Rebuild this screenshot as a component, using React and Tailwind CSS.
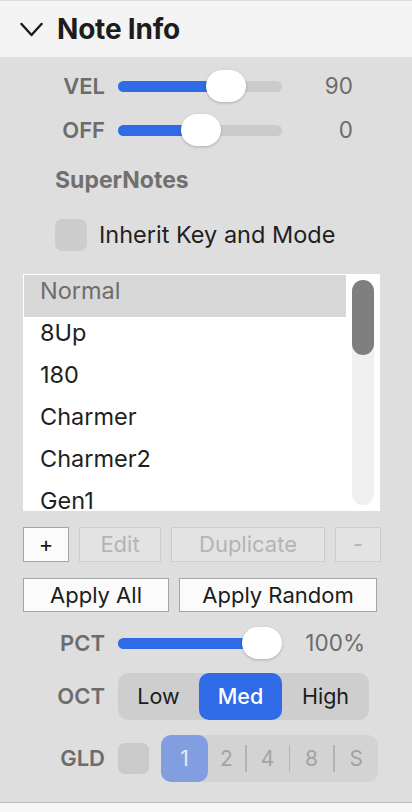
import React from 'react';

const FONT = "font-['Inter','Liberation_Sans',sans-serif]";

const Slider = ({ frac }) => {
  const left = Math.round(frac * 124);
  return (
    <div className="relative w-[164px] h-[11px] rounded-full bg-[#cbcbcb]">
      <div className="absolute left-0 top-0 h-full rounded-full bg-[#2f6be7]" style={{ width: left + 20 }} />
      <div
        className="absolute top-[-11px] w-[40px] h-[32px] rounded-[16px] bg-white shadow-[0_1px_3px_rgba(0,0,0,0.22)]"
        style={{ left }}
      />
    </div>
  );
};

const SliderRow = ({ label, frac, value, valueWidth = 'w-[71px]' }) => (
  <div className="flex items-center h-[32px]">
    <span className="w-[105px] text-right text-[22px] font-semibold text-[#6c6c6c]">{label}</span>
    <div className="ml-[13px]">
      <Slider frac={frac} />
    </div>
    <span className={`${valueWidth} text-right text-[22.5px] text-[#6c6c6c]`}>{value}</span>
  </div>
);

const Btn = ({ children, width, disabled, height = 'h-[35px]' }) => (
  <button
    className={`${width} ${height} flex items-center justify-center text-[22px] border-[1.5px] ${
      disabled
        ? 'bg-[#e3e3e3] border-[#cdcdcd] text-[#b4b4b4]'
        : 'bg-[#fbfbfb] border-[#a5a5a5] text-[#1c1c1c]'
    }`}
  >
    {children}
  </button>
);

const items = ['Normal', '8Up', '180', 'Charmer', 'Charmer2', 'Gen1'];

export default function App() {
  return (
    <div className={`w-[412px] h-[812px] bg-[#f7f7f7] ${FONT}`}>
      {/* header */}
      <div className="h-[57px] border-t border-[#dcdcdc] bg-[#f4f4f4] flex items-center pl-[20px]">
        <svg width="23" height="15" viewBox="0 0 23 15" fill="none">
          <polyline points="1.5,2 11.5,13 21.5,2" stroke="#1a1a1a" strokeWidth="2.4" strokeLinecap="round" strokeLinejoin="round" />
        </svg>
        <span className="ml-[14px] text-[28px] font-bold text-[#1d1d1d] tracking-[-0.2px]">Note Info</span>
      </div>

      <div className="h-[746px] bg-[#dedede] border-b border-[#bdbdbd] pt-[13px]">
        <SliderRow label="VEL" frac={88 / 124} value="90" />
        <div className="mt-[12px]">
          <SliderRow label="OFF" frac={63 / 124} value="0" />
        </div>

        <div className="mt-[22px] pl-[55px] h-[24px] flex items-center text-[23px] font-bold text-[#707070]">
          SuperNotes
        </div>

        <div className="mt-[27px] pl-[55px] h-[32px] flex items-center">
          <div className="w-[32px] h-[32px] rounded-[7px] bg-[#cdcdcd]" />
          <span className="ml-[12px] text-[23.5px] leading-[32px] text-[#1f1f1f]">Inherit Key and Mode</span>
        </div>

        {/* list */}
        <div className="mt-[23px] ml-[23px] w-[357px] h-[237px] bg-white p-px flex">
          <div className="w-[322px] overflow-hidden">
            {items.map((it, i) => (
              <div
                key={it}
                className={`h-[42px] flex items-center pl-[16px] pb-[10px] text-[23.5px] ${
                  i === 0 ? 'bg-[#d8d8d8] text-[#6d6d6d]' : 'text-[#1f1f1f]'
                }`}
              >
                {it}
              </div>
            ))}
          </div>
          <div className="ml-[6px] mt-[5px] w-[22px] h-[225px] rounded-full bg-[#f0f0f0]">
            <div className="w-[22px] h-[75px] rounded-full bg-[#7f7f7f]" />
          </div>
        </div>

        {/* list buttons */}
        <div className="mt-[16px] ml-[23px] flex gap-[10px]">
          <Btn width="w-[46px]">+</Btn>
          <Btn width="w-[82px]" disabled>Edit</Btn>
          <Btn width="w-[154px]" disabled>Duplicate</Btn>
          <Btn width="w-[46px]" disabled>-</Btn>
        </div>
        <div className="mt-[16px] ml-[23px] flex gap-[10px]">
          <Btn width="w-[146px]" height="h-[34px]">Apply All</Btn>
          <Btn width="w-[198px]" height="h-[34px]">Apply Random</Btn>
        </div>

        <div className="mt-[15px]">
          <SliderRow label="PCT" frac={1} value="100%" valueWidth="w-[83px]" />
        </div>

        {/* OCT */}
        <div className="mt-[14px] flex items-center h-[47px]">
          <span className="w-[105px] text-right text-[22px] font-semibold text-[#6c6c6c]">OCT</span>
          <div className="ml-[13px] w-[251px] h-[47px] rounded-[10px] bg-[#cecece] flex text-[21.5px] text-[#1c1c1c]">
            <div className="w-[81px] flex items-center justify-center">Low</div>
            <div className="w-[83px] flex items-center justify-center rounded-[10px] bg-[#2f6be7] text-white font-medium">Med</div>
            <div className="flex-1 flex items-center justify-center">High</div>
          </div>
        </div>

        {/* GLD */}
        <div className="mt-[15px] flex items-center h-[47px]">
          <span className="w-[105px] text-right text-[22px] font-semibold text-[#6c6c6c]">GLD</span>
          <div className="ml-[13px] w-[31px] h-[31px] rounded-[7px] bg-[#cacaca]" />
          <div className="ml-[12px] w-[217px] h-[47px] rounded-[10px] bg-[#d3d3d3] flex items-center text-[21px] text-[#a3a3a3]">
            <div className="w-[47px] h-[47px] rounded-[10px] bg-[#819fe0] text-[#e6ecfa] flex items-center justify-center">1</div>
            <div className="w-[37px] flex justify-center">2</div>
            <div className="w-[1.5px] h-[27px] bg-[#b3b3b3]" />
            <div className="w-[42px] flex justify-center">4</div>
            <div className="w-[1.5px] h-[27px] bg-[#b3b3b3]" />
            <div className="w-[43px] flex justify-center">8</div>
            <div className="w-[1.5px] h-[27px] bg-[#b3b3b3]" />
            <div className="flex-1 flex justify-center">S</div>
          </div>
        </div>
      </div>
    </div>
  );
}
